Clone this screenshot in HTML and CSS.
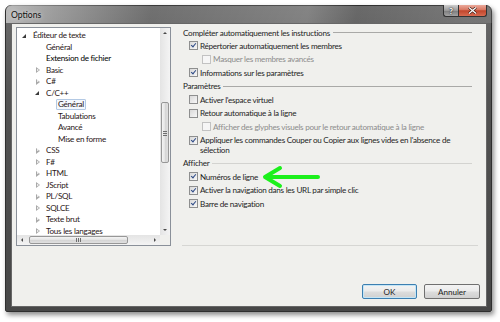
FILE: index.html
```html
<!DOCTYPE html>
<html lang="fr">
<head>
  <meta charset="UTF-8">
  <title>Options</title>
  <link rel="stylesheet" href="styles.css">
</head>
<body>

  <div class="window">
    <!-- Barre de titre -->
    <div class="titlebar">
      <span class="title">Options</span>
      <div class="caption">
        <span class="cap help">?</span>
        <span class="cap close">
          <svg width="9" height="7" viewBox="0 0 9 7"><path d="M1 0.5 L8 6.5 M8 0.5 L1 6.5" stroke="#3a1a12" stroke-width="2.6"/><path d="M1 0.5 L8 6.5 M8 0.5 L1 6.5" stroke="#fff" stroke-width="1.3"/></svg>
        </span>
      </div>
    </div>

    <div class="client">
      <div class="main">

        <!-- Arborescence -->
        <div class="tree">
          <ul class="tree-list">
            <li class="l0"><span class="tw exp"></span><span class="label">Éditeur de texte</span></li>
            <li class="l1"><span class="tw"></span><span class="label">Général</span></li>
            <li class="l1"><span class="tw"></span><span class="label dark">Extension de fichier</span></li>
            <li class="l1"><span class="tw col"></span><span class="label">Basic</span></li>
            <li class="l1"><span class="tw col"></span><span class="label">C#</span></li>
            <li class="l1"><span class="tw exp"></span><span class="label">C/C++</span></li>
            <li class="l2 sel"><span class="tw"></span><span class="label">Général</span></li>
            <li class="l2"><span class="tw"></span><span class="label">Tabulations</span></li>
            <li class="l2"><span class="tw"></span><span class="label">Avancé</span></li>
            <li class="l2"><span class="tw"></span><span class="label">Mise en forme</span></li>
            <li class="l1"><span class="tw col"></span><span class="label">CSS</span></li>
            <li class="l1"><span class="tw col"></span><span class="label">F#</span></li>
            <li class="l1"><span class="tw col"></span><span class="label">HTML</span></li>
            <li class="l1"><span class="tw col"></span><span class="label">JScript</span></li>
            <li class="l1"><span class="tw col"></span><span class="label">PL/SQL</span></li>
            <li class="l1"><span class="tw col"></span><span class="label">SQLCE</span></li>
            <li class="l1"><span class="tw col"></span><span class="label">Texte brut</span></li>
            <li class="l1"><span class="tw col"></span><span class="label">Tous les langages</span></li>
          </ul>
          <div class="vscroll">
            <span class="sb-btn up"></span>
            <div class="vtrack"><span class="vthumb"></span></div>
            <span class="sb-btn down"></span>
          </div>
          <div class="hscroll">
            <span class="sb-btn left"></span>
            <div class="htrack"><span class="hthumb"></span></div>
            <span class="sb-btn right"></span>
          </div>
          <div class="corner"></div>
        </div>

        <!-- Options de l'éditeur -->
        <div class="pane">
          <div class="group">Compléter automatiquement les instructions</div>
          <div class="opt"><span class="cb on"></span>Répertorier automatiquement les membres</div>
          <div class="opt sub off"><span class="cb"></span>Masquer les membres avancés</div>
          <div class="opt"><span class="cb on"></span>Informations sur les paramètres</div>

          <div class="group">Paramètres</div>
          <div class="opt"><span class="cb"></span>Activer l'espace virtuel</div>
          <div class="opt"><span class="cb"></span>Retour automatique à la ligne</div>
          <div class="opt sub off"><span class="cb"></span>Afficher des glyphes visuels pour le retour automatique à la ligne</div>
          <div class="opt"><span class="cb on"></span><span>Appliquer les commandes Couper ou Copier aux lignes vides en l'absence de<br>sélection</span></div>

          <div class="group light">Afficher</div>
          <div class="opt"><span class="cb on"></span>Numéros de ligne</div>
          <div class="opt"><span class="cb on"></span>Activer la navigation dans les URL par simple clic</div>
          <div class="opt"><span class="cb on"></span>Barre de navigation</div>
        </div>
      </div>

      <div class="buttons">
        <button class="btn default">OK</button>
        <button class="btn">Annuler</button>
      </div>
    </div>
  </div>

  <!-- Flèche verte -->
  <svg class="marker" width="58" height="24" viewBox="0 0 58 24">
    <path d="M3 12 L56 12 M18 3 L3 12 L18 21" fill="none" stroke="#1cf01c" stroke-width="4" stroke-linecap="round" stroke-linejoin="round"/>
  </svg>

</body>
</html>
```

FILE: styles.css
```css
html, body {
  margin: 0;
  padding: 0;
  background: #fff;
  font-family: Lato, "Open Sans", sans-serif;
  font-size: 8.1px;
  letter-spacing: -0.26px;
  color: #1e1e1e;
}
body {
  position: relative;
  width: 500px;
  height: 322px;
  overflow: hidden;
}

/* Fenêtre */
.window {
  margin: 5px 0 0 5px;
  width: 487px;
  height: 307px;
  box-sizing: border-box;
  padding: 0 4px 4px 5px;
  display: flex;
  flex-direction: column;
  background: linear-gradient(#6a6a6a, #525252 30%, #474747);
  border: 1px solid #2f2f2f;
  border-radius: 6px 6px 2px 2px;
  box-shadow: 2px 3px 5px rgba(0, 0, 0, 0.45);
}
.titlebar {
  height: 18px;
  margin: -1px -5px 0 -5px;
  padding-left: 5px;
  display: flex;
  justify-content: space-between;
  align-items: flex-start;
  border-radius: 6px 6px 0 0;
  background: linear-gradient(100deg, rgba(255,255,255,0.55) 0%, rgba(255,255,255,0.35) 10%, rgba(255,255,255,0.05) 30%, rgba(255,255,255,0.18) 62%, rgba(255,255,255,0) 72%, rgba(255,255,255,0.1) 95%);
}
.title {
  line-height: 18px;
  padding-top: 1px;
  font-size: 8.6px;
  letter-spacing: 0;
  color: #111;
  text-shadow: 0 0 4px rgba(255,255,255,0.8);
}
.caption {
  display: flex;
  margin-right: 5px;
}
.cap {
  height: 11px;
  display: flex;
  align-items: center;
  justify-content: center;
  border: 1px solid #333;
  border-top: none;
}
.help {
  width: 14px;
  border-right: none;
  border-radius: 0 0 0 3px;
  background: linear-gradient(#cfcfcf, #9a9a9a 50%, #7c7c7c 52%, #a2a2a2);
  color: #fff;
  font-weight: bold;
  font-size: 8px;
  text-shadow: 0 0 2px #222, 0 0 1px #222;
}
.close {
  width: 27px;
  border-radius: 0 0 3px 0;
  background: linear-gradient(#eaa99b, #d87560 45%, #c2462c 52%, #d76a50);
}

/* Zone cliente */
.client {
  flex: 1;
  display: flex;
  flex-direction: column;
  background: #f0f0ed;
  border: 1px solid #676767;
  padding: 3px 7px 7px 4px;
}
.main {
  display: flex;
  height: 219px;
}

/* Arborescence */
.tree {
  width: 155px;
  box-sizing: border-box;
  border: 1px solid #8a9099;
  background: #fff;
  display: grid;
  grid-template-columns: 143px 10px;
  grid-template-rows: 207px 10px;
}
.tree-list {
  list-style: none;
  margin: 0;
  padding: 2px 0 0 0;
  overflow: hidden;
  color: #2a1616;
}
.tree-list li {
  height: 11.5px;
  display: flex;
  align-items: center;
  white-space: nowrap;
}
.tree-list .l0 { padding-left: 4px; }
.tree-list .l1 { padding-left: 17px; }
.tree-list .l2 { padding-left: 29px; }
.tw {
  width: 10px;
  height: 8px;
  position: relative;
}
.tw.exp::before {
  content: "";
  position: absolute;
  left: 1px;
  top: 2px;
  border-left: 4px solid transparent;
  border-bottom: 4px solid #3a3a3a;
}
.tw.col::before,
.tw.col::after {
  content: "";
  position: absolute;
  top: 1px;
  left: 2px;
  border-left: 4px solid #a9a9a9;
  border-top: 3px solid transparent;
  border-bottom: 3px solid transparent;
}
.tw.col::after {
  top: 2.5px;
  left: 2.6px;
  border-left: 2px solid #fff;
  border-top-width: 1.5px;
  border-bottom-width: 1.5px;
}
.label {
  padding: 0 1px;
  border: 1px solid transparent;
  line-height: 9px;
}
.label.dark {
  color: #000;
}
.sel .label {
  border-color: #b3c9e4;
  background: #f4f8fd;
  border-radius: 1px;
}

/* Barres de défilement */
.vscroll {
  display: flex;
  flex-direction: column;
  background: linear-gradient(to right, #e4e4e4, #f4f4f4);
}
.hscroll {
  display: flex;
  background: linear-gradient(#e4e4e4, #f4f4f4);
}
.corner {
  background: #f0f0ed;
}
.sb-btn {
  width: 10px;
  height: 10px;
  flex: none;
  position: relative;
}
.sb-btn::before {
  content: "";
  position: absolute;
}
.up::before {
  left: 3px;
  top: 4px;
  border-bottom: 2px solid #4a4a4a;
  border-left: 2px solid transparent;
  border-right: 2px solid transparent;
}
.down::before {
  left: 3px;
  top: 4px;
  border-top: 2px solid #4a4a4a;
  border-left: 2px solid transparent;
  border-right: 2px solid transparent;
}
.left::before {
  left: 4px;
  top: 3px;
  border-right: 2px solid #4a4a4a;
  border-top: 2px solid transparent;
  border-bottom: 2px solid transparent;
}
.right::before {
  left: 4px;
  top: 3px;
  border-left: 2px solid #4a4a4a;
  border-top: 2px solid transparent;
  border-bottom: 2px solid transparent;
}
.vtrack, .htrack {
  flex: 1;
  display: flex;
}
.vthumb {
  margin: 64px 0 0 1px;
  width: 8px;
  height: 61px;
  box-sizing: border-box;
  border: 1px solid #979797;
  border-radius: 2px;
  background: linear-gradient(to right, #f4f4f4, #e2e2e2 50%, #d4d4d4 51%, #e0e0e0);
  position: relative;
}
.vthumb::after {
  content: "";
  position: absolute;
  left: 1px;
  top: 28px;
  width: 4px;
  height: 5px;
  background: repeating-linear-gradient(#6f6f6f 0 1px, transparent 1px 2px);
}
.hthumb {
  margin: 1px 0 0 2px;
  width: 99px;
  height: 8px;
  box-sizing: border-box;
  border: 1px solid #979797;
  border-radius: 2px;
  background: linear-gradient(#f4f4f4, #e2e2e2 50%, #d4d4d4 51%, #e0e0e0);
  position: relative;
}
.hthumb::after {
  content: "";
  position: absolute;
  left: 46px;
  top: 1px;
  width: 5px;
  height: 4px;
  background: repeating-linear-gradient(to right, #6f6f6f 0 1px, transparent 1px 2px);
}

/* Volet des options */
.pane {
  margin-left: 11px;
  width: 296px;
  box-sizing: border-box;
  border-bottom: 1px solid #d6d6d3;
  padding-top: 0.5px;
  display: flex;
  flex-direction: column;
  gap: 3.45px;
  line-height: 10px;
  white-space: nowrap;
}
.group {
  display: flex;
  align-items: center;
  padding: 0 6px 0 1px;
}
.group::after {
  content: "";
  flex: 1;
  height: 1px;
  margin-left: 3px;
  background: #a9a9a7;
}
.group.light::after {
  background: #d3d3d0;
}
.opt {
  display: flex;
  align-items: flex-start;
  padding-left: 7px;
}
.opt.sub {
  padding-left: 20px;
}
.opt.off {
  color: #8c8c8c;
}
.cb {
  flex: none;
  width: 9px;
  height: 9px;
  box-sizing: border-box;
  margin: 0.5px 2px 0 0;
  border: 1px solid #8e8f8f;
  background: linear-gradient(135deg, #d9d9d9, #f7f7f7);
  position: relative;
}
.off .cb {
  border-color: #c2c2c2;
  background: #f6f6f6;
}
.cb.on::after {
  content: "";
  position: absolute;
  left: 2px;
  top: 0px;
  width: 2px;
  height: 4px;
  border-right: 1.3px solid #2d4a86;
  border-bottom: 1.3px solid #2d4a86;
  transform: rotate(40deg);
}

/* Boutons */
.buttons {
  margin-top: auto;
  display: flex;
  justify-content: flex-end;
  gap: 7px;
  margin-right: -1px;
}
.btn {
  height: 15px;
  width: 55px;
  padding: 0;
  font-family: inherit;
  font-size: 8.1px;
  color: #1e1e1e;
  border: 1px solid #707070;
  border-radius: 2px;
  background: linear-gradient(#f3f3f3, #ebebeb 48%, #dddddd 52%, #d0d0d0);
}
.btn + .btn {
  width: 56px;
}
.btn.default {
  border-color: #3c7fb1;
  box-shadow: inset 0 0 0 1px #c4e5f6;
}

/* Annotation */
.marker {
  position: absolute;
  left: 262px;
  top: 165px;
}
```
